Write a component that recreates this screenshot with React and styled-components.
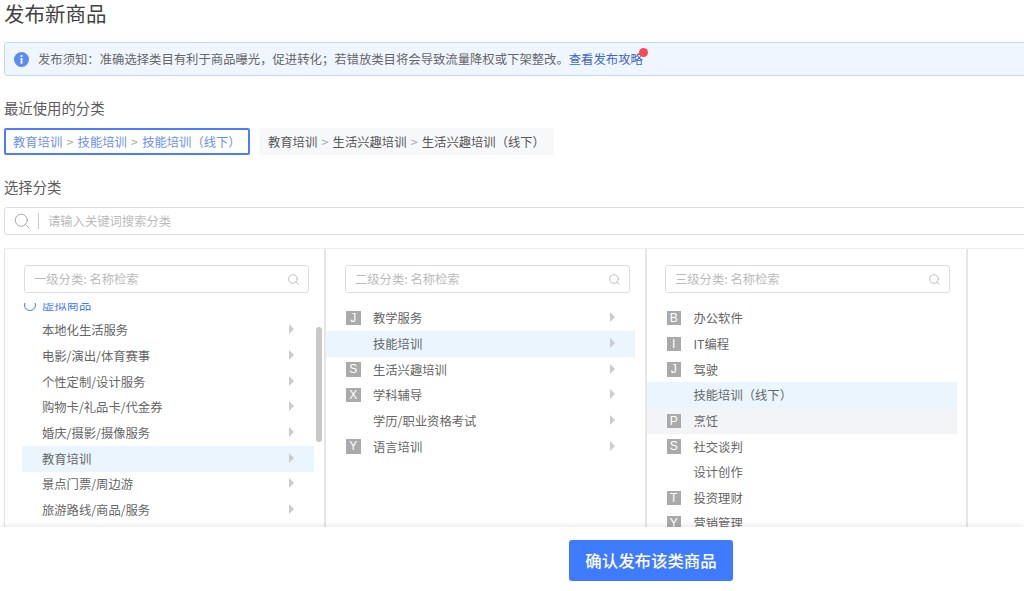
import React from 'react';
import styled, { createGlobalStyle } from 'styled-components';
import { Search } from 'lucide-react';

const GlobalStyle = createGlobalStyle`
  html, body {
    margin: 0;
    padding: 0;
    background: #fff;
    overflow: hidden;
    font-family: 'Noto Sans CJK SC', 'Liberation Sans', sans-serif;
  }
  * { box-sizing: border-box; }
`;

const Page = styled.div`
  width: 1024px;
  height: 591px;
  display: flex;
  flex-direction: column;
  overflow: hidden;
`;

const Content = styled.div`
  width: 1060px;
  padding-left: 4px;
  flex: none;
`;

const Title = styled.h1`
  margin: 0;
  height: 30px;
  font-size: 20.5px;
  line-height: 26px;
  font-weight: 400;
  color: #444;
`;

const Notice = styled.div`
  margin-top: 12px;
  height: 34px;
  display: flex;
  align-items: center;
  gap: 9px;
  padding-left: 9px;
  background: #f0f6ff;
  border: 1px solid #c0d8fb;
  border-radius: 3px;
  font-size: 12.35px;
  color: #666;
`;

const NoticeLink = styled.a`
  position: relative;
  color: #3d68c4;
`;

const RedDot = styled.span`
  position: absolute;
  right: -5px;
  top: -2px;
  width: 9px;
  height: 9px;
  border-radius: 50%;
  background: #fb4a55;
`;

const SectionLabel = styled.div`
  margin-top: ${props => props.$top}px;
  height: 20px;
  font-size: 14.37px;
  line-height: 18px;
  color: #5c5c5c;
`;

const ChipRow = styled.div`
  margin-top: 9px;
  display: flex;
  gap: 9px;
`;

const Chip = styled.div`
  height: 27px;
  width: ${props => props.$width}px;
  display: flex;
  align-items: center;
  padding-left: ${props => (props.$active ? 7 : 9)}px;
  font-size: 12.32px;
  white-space: pre;
  border-radius: 2px;
  color: ${props => (props.$active ? '#6b8ff0' : '#555')};
  background: ${props => (props.$active ? '#fff' : '#f7f8fa')};
  border: ${props => (props.$active ? '2px solid #4a7dff' : 'none')};
`;

const ChipSep = styled.span`
  color: #aaa;
  margin: 0 4.25px;
`;

const MainSearch = styled.div`
  margin-top: 9px;
  height: 28px;
  display: flex;
  align-items: center;
  padding-left: 8px;
  border: 1px solid #ddd;
  border-radius: 3px;
  color: #999;
`;

const SearchDivider = styled.span`
  width: 1px;
  height: 16px;
  margin: 0 9px 0 7px;
  background: #ccc;
`;

const Placeholder = styled.span`
  flex: 1;
  font-size: 12.32px;
  color: #bbb;
`;

const Columns = styled.div`
  margin-top: 13px;
  height: 279px;
  display: flex;
  border-top: 1px solid #eee;
`;

const Column = styled.div`
  position: relative;
  width: ${props => props.$width}px;
  flex: none;
  display: flex;
  flex-direction: column;
  border-left: ${props => (props.$first ? '1px solid #e4e4e4' : 'none')};
  border-right: 2px solid #e6e6e6;
  overflow: hidden;
`;

const ColumnSearch = styled.div`
  flex: none;
  margin: 16px 0 10px ${props => props.$left}px;
  width: 285px;
  height: 28px;
  display: flex;
  align-items: center;
  justify-content: space-between;
  padding: 0 8px 0 9px;
  border: 1px solid #ddd;
  border-radius: 3px;
  color: #aaa;
`;

const List = styled.div`
  flex: 1;
  min-height: 0;
  overflow: hidden;
  margin-left: ${props => props.$left}px;
  width: ${props => props.$width}px;
`;

const ListInner = styled.div`
  margin-top: ${props => props.$offset}px;
`;

const Row = styled.div`
  height: 25.67px;
  display: flex;
  align-items: center;
  padding-left: 20px;
  font-size: 12.32px;
  color: #666;
  background: ${props =>
    props.$state === 'selected' ? '#eaf5fd' : props.$state === 'hover' ? '#f3f4f8' : 'transparent'};
`;

const GroupRow = styled(Row)`
  padding-left: 2px;
  gap: 6px;
  color: #3f7bff;
`;

const GroupDot = styled.span`
  width: 12px;
  height: 12px;
  border-radius: 50%;
  border: 1px solid #3f7bff;
`;

const BadgeSlot = styled.span`
  width: 27px;
  flex: none;
`;

const Badge = styled.span`
  display: block;
  width: 14.5px;
  height: 14.5px;
  background: #aaa;
  color: #fff;
  font-size: 12px;
  line-height: 14.5px;
  text-align: center;
  font-family: 'Liberation Sans', sans-serif;
`;

const RowText = styled.span`
  flex: 1;
`;

const Arrow = styled.span`
  width: 0;
  height: 0;
  margin: -2px 20px 0 0;
  border-top: 5px solid transparent;
  border-bottom: 5px solid transparent;
  border-left: 5px solid #ccc;
`;

const ScrollThumb = styled.div`
  position: absolute;
  right: 2px;
  top: 78px;
  width: 6px;
  height: 115px;
  border-radius: 3px;
  background: #c8c8c8;
`;

const Footer = styled.div`
  flex: 1;
  display: flex;
  align-items: flex-start;
  padding: 13px 0 0 569px;
  background: #fff;
  position: relative;
  box-shadow: 0 -2px 5px rgba(0, 0, 0, 0.08);
`;

const ConfirmButton = styled.button`
  width: 164px;
  height: 41px;
  padding: 0 0 2px;
  border: none;
  border-radius: 3px;
  background: #3f7bff;
  color: #fff;
  font-family: inherit;
  font-size: 16.43px;
  font-weight: 500;
`;

const InfoIcon = () => (
  <svg width="15" height="15" viewBox="0 0 15 15">
    <circle cx="7.5" cy="7.5" r="7.5" fill="#5b8def" />
    <rect x="6.6" y="3" width="1.8" height="1.9" fill="#fff" />
    <rect x="6.6" y="6" width="1.8" height="5.8" fill="#fff" />
  </svg>
);

const firstLevel = [
  '本地化生活服务',
  '电影/演出/体育赛事',
  '个性定制/设计服务',
  '购物卡/礼品卡/代金券',
  '婚庆/摄影/摄像服务',
  '教育培训',
  '景点门票/周边游',
  '旅游路线/商品/服务',
];

const secondLevel = [
  { letter: 'J', name: '教学服务' },
  { name: '技能培训', state: 'selected' },
  { letter: 'S', name: '生活兴趣培训' },
  { letter: 'X', name: '学科辅导' },
  { name: '学历/职业资格考试' },
  { letter: 'Y', name: '语言培训' },
];

const thirdLevel = [
  { letter: 'B', name: '办公软件' },
  { letter: 'I', name: 'IT编程' },
  { letter: 'J', name: '驾驶' },
  { name: '技能培训（线下）', state: 'selected' },
  { letter: 'P', name: '烹饪', state: 'hover' },
  { letter: 'S', name: '社交谈判' },
  { name: '设计创作' },
  { letter: 'T', name: '投资理财' },
  { letter: 'Y', name: '营销管理' },
];

const LetterRow = ({ item, arrow }) => (
  <Row $state={item.state}>
    <BadgeSlot>{item.letter && <Badge>{item.letter}</Badge>}</BadgeSlot>
    <RowText>{item.name}</RowText>
    {arrow && <Arrow />}
  </Row>
);

const App = () => (
  <Page>
    <GlobalStyle />
    <Content>
      <Title>发布新商品</Title>
      <Notice>
        <InfoIcon />
        <span>
          发布须知：准确选择类目有利于商品曝光，促进转化；若错放类目将会导致流量降权或下架整改。
          <NoticeLink>
            查看发布攻略
            <RedDot />
          </NoticeLink>
        </span>
      </Notice>

      <SectionLabel $top={23}>最近使用的分类</SectionLabel>
      <ChipRow>
        <Chip $active $width={246}>
          教育培训<ChipSep>&gt;</ChipSep>技能培训<ChipSep>&gt;</ChipSep>技能培训（线下）
        </Chip>
        <Chip $width={295}>
          教育培训<ChipSep>&gt;</ChipSep>生活兴趣培训<ChipSep>&gt;</ChipSep>生活兴趣培训（线下）
        </Chip>
      </ChipRow>

      <SectionLabel $top={23}>选择分类</SectionLabel>
      <MainSearch>
        <Search size={18} strokeWidth={1.1} />
        <SearchDivider />
        <Placeholder>请输入关键词搜索分类</Placeholder>
      </MainSearch>

      <Columns>
        <Column $first $width={322}>
          <ColumnSearch $left={19}>
            <Placeholder>一级分类: 名称检索</Placeholder>
            <Search size={13} strokeWidth={1.3} />
          </ColumnSearch>
          <List $left={17} $width={292}>
            <ListInner $offset={-11}>
              <GroupRow>
                <GroupDot />
                虚拟商品
              </GroupRow>
              {firstLevel.map(name => (
                <Row key={name} $state={name === '教育培训' ? 'selected' : undefined}>
                  <RowText>{name}</RowText>
                  <Arrow />
                </Row>
              ))}
            </ListInner>
          </List>
          <ScrollThumb />
        </Column>

        <Column $width={320.5}>
          <ColumnSearch $left={19}>
            <Placeholder>二级分类: 名称检索</Placeholder>
            <Search size={13} strokeWidth={1.3} />
          </ColumnSearch>
          <List $left={0} $width={309}>
            <ListInner $offset={2.4}>
              {secondLevel.map(item => (
                <LetterRow key={item.name} item={item} arrow />
              ))}
            </ListInner>
          </List>
        </Column>

        <Column $width={321.5}>
          <ColumnSearch $left={18.5}>
            <Placeholder>三级分类: 名称检索</Placeholder>
            <Search size={13} strokeWidth={1.3} />
          </ColumnSearch>
          <List $left={0} $width={310}>
            <ListInner $offset={2.4}>
              {thirdLevel.map(item => (
                <LetterRow key={item.name} item={item} />
              ))}
            </ListInner>
          </List>
        </Column>
      </Columns>
    </Content>
    <Footer>
      <ConfirmButton>确认发布该类商品</ConfirmButton>
    </Footer>
  </Page>
);

export default App;
